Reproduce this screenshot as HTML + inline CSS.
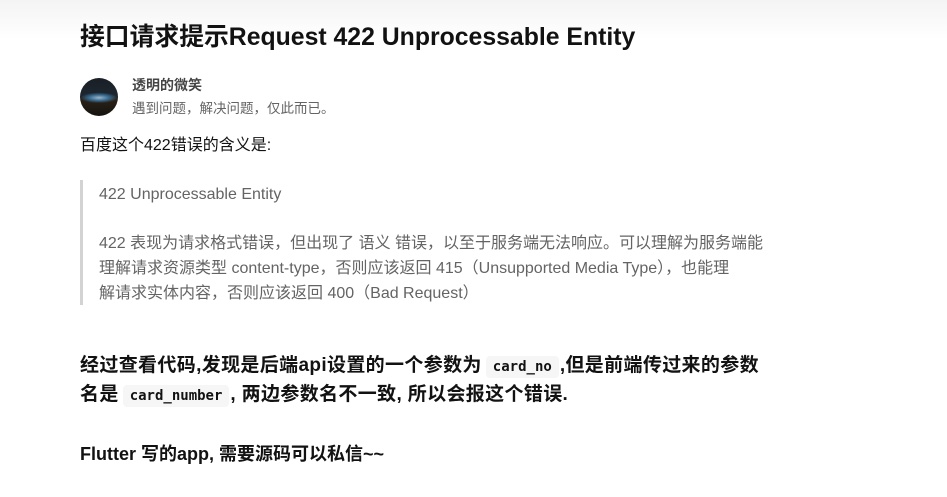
<!DOCTYPE html>
<html><head><meta charset="utf-8"><style>
body{margin:0;width:947px;height:497px;overflow:hidden;background:linear-gradient(#f4f4f4 0,#fff 40px,#fff);font-family:"Liberation Sans","Noto Sans CJK SC",sans-serif;color:#121212;position:relative}
.a{position:absolute;white-space:nowrap}
h1{margin:0;font-size:24.8px;font-weight:bold;left:80px;top:22px;line-height:32px}
.av{left:80px;top:78px;width:38px;height:38px;border-radius:50%;background:radial-gradient(ellipse 70% 20% at 50% 52%,#9fb7c9 0,#3b6f95 35%,transparent 70%),linear-gradient(#1a1f25 0,#1d2630 48%,#2a2218 56%,#15130f 100%)}
.q{left:99px;font-size:16px;color:#646464;line-height:25px}
.b{left:80px;font-size:19px;font-weight:bold;line-height:29px;letter-spacing:0.35px}
code{font-family:"DejaVu Sans Mono","Liberation Mono",monospace;font-weight:600;font-size:14px;background:#f6f6f6;border-radius:4px;padding:3px 7px;color:#121212;margin:0 1px 0 4px;letter-spacing:0}
</style></head><body>
<h1 class="a">接口请求提示Request 422 Unprocessable Entity</h1>
<div class="a av"></div>
<div class="a" style="left:132px;top:75px;font-size:14px;font-weight:bold;color:#444">透明的微笑</div>
<div class="a" style="left:132px;top:97px;font-size:13.5px;color:#646464">遇到问题，解决问题，仅此而已。</div>
<div class="a" style="left:80px;top:135px;font-size:16px;line-height:22px">百度这个422错误的含义是:</div>
<div class="a" style="left:80px;top:180px;width:3px;height:125px;background:#d3d3d3"></div>
<div class="a q" style="top:182px">422 Unprocessable Entity</div>
<div class="a q" style="top:231px">422 表现为请求格式错误，但出现了 语义 错误，以至于服务端无法响应。可以理解为服务端能</div>
<div class="a q" style="top:256px">理解请求资源类型 content-type，否则应该返回 415（Unsupported Media Type），也能理</div>
<div class="a q" style="top:281px">解请求实体内容，否则应该返回 400（Bad Request）</div>
<div class="a b" style="top:351px">经过查看代码,发现是后端api设置的一个参数为<code>card_no</code>,但是前端传过来的参数</div>
<div class="a b" style="top:380px">名是<code>card_number</code>, 两边参数名不一致, 所以会报这个错误.</div>
<div class="a b" style="top:440px;font-size:18px;letter-spacing:0">Flutter 写的app, 需要源码可以私信~~</div>
</body></html>
